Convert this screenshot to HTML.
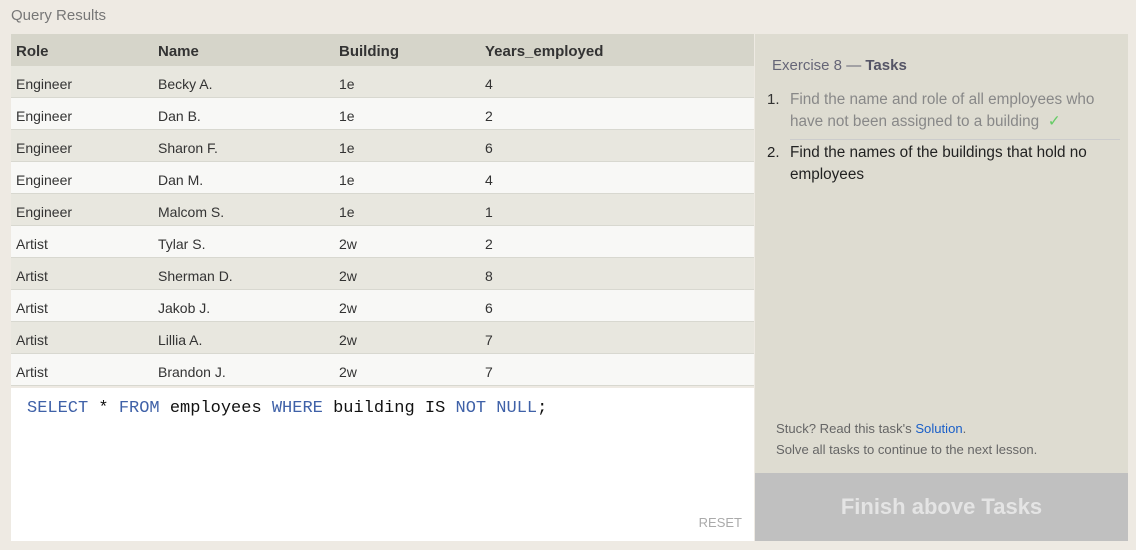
<!DOCTYPE html>
<html><head><style>
body{margin:0;width:1136px;height:550px;background:#eeeae3;font-family:"Liberation Sans",sans-serif;position:relative;overflow:hidden;color:#333}
.title{position:absolute;left:11px;top:7px;font-size:15px;color:#777}
.tbl{position:absolute;left:11px;top:34px;width:743px}
.row{height:31px;border-bottom:1px solid #d8d8d0;position:relative;font-size:14px;line-height:32px}
.row span{position:absolute;top:2px}
.hd{background:#d6d5ca;height:32px;border:0;font-weight:bold;font-size:15px;color:#333}
.o{background:#e8e7df}.e{background:#f8f8f6}
.c1{left:5px}.c2{left:147px}.c3{left:328px}.c4{left:474px}
.ed{position:absolute;left:11px;top:388px;width:743px;height:153px;background:#fff}
.code{position:absolute;left:16px;top:11px;font-family:"Liberation Mono",monospace;font-size:17px;color:#111}
.k{color:#3f61a8}
.reset{position:absolute;right:12px;bottom:11px;font-size:13px;color:#aaa}
.rp{position:absolute;left:755px;top:34px;width:373px;height:439px;background:#dedcd1}
.btn{position:absolute;left:755px;top:473px;width:373px;height:68px;background:#c0c0c0;color:#e4e4e4;font-size:22px;text-align:center;line-height:68px;font-weight:bold}
</style></head><body>
<div class="title">Query Results</div>
<div class="tbl">
<div class="row hd"><span class="c1">Role</span><span class="c2">Name</span><span class="c3">Building</span><span class="c4">Years_employed</span></div>
<div class="row o"><span class="c1">Engineer</span><span class="c2">Becky A.</span><span class="c3">1e</span><span class="c4">4</span></div>
<div class="row e"><span class="c1">Engineer</span><span class="c2">Dan B.</span><span class="c3">1e</span><span class="c4">2</span></div>
<div class="row o"><span class="c1">Engineer</span><span class="c2">Sharon F.</span><span class="c3">1e</span><span class="c4">6</span></div>
<div class="row e"><span class="c1">Engineer</span><span class="c2">Dan M.</span><span class="c3">1e</span><span class="c4">4</span></div>
<div class="row o"><span class="c1">Engineer</span><span class="c2">Malcom S.</span><span class="c3">1e</span><span class="c4">1</span></div>
<div class="row e"><span class="c1">Artist</span><span class="c2">Tylar S.</span><span class="c3">2w</span><span class="c4">2</span></div>
<div class="row o"><span class="c1">Artist</span><span class="c2">Sherman D.</span><span class="c3">2w</span><span class="c4">8</span></div>
<div class="row e"><span class="c1">Artist</span><span class="c2">Jakob J.</span><span class="c3">2w</span><span class="c4">6</span></div>
<div class="row o"><span class="c1">Artist</span><span class="c2">Lillia A.</span><span class="c3">2w</span><span class="c4">7</span></div>
<div class="row e"><span class="c1">Artist</span><span class="c2">Brandon J.</span><span class="c3">2w</span><span class="c4">7</span></div>
</div>
<div class="ed"><div class="code"><span class="k">SELECT</span> * <span class="k">FROM</span> employees <span class="k">WHERE</span> building IS <span class="k">NOT NULL</span>;</div><div class="reset">RESET</div></div>
<div class="rp">
<div style="position:absolute;left:17px;top:23px;font-size:15px;color:#667"><span>Exercise 8 — </span><b style="color:#556">Tasks</b></div>
<div style="position:absolute;left:12px;top:55px;font-size:15px;line-height:22px;color:#333">1.</div>
<div style="position:absolute;left:35px;top:55px;width:330px;font-size:15.3px;line-height:22px;color:#888;border-bottom:1px solid #ccc;padding-bottom:6px">Find the name and role of all employees who have not been assigned to a building &nbsp;<span style="color:#6c6">✓</span></div>
<div style="position:absolute;left:12px;top:108px;font-size:15px;line-height:22px;color:#222">2.</div>
<div style="position:absolute;left:35px;top:108px;width:330px;font-size:15.3px;line-height:22px;color:#222">Find the names of the buildings that hold no employees</div>
<div style="position:absolute;left:21px;top:384px;font-size:13.1px;line-height:21px;color:#666">Stuck? Read this task's <span style="color:#1a5fc8">Solution</span>.<br>Solve all tasks to continue to the next lesson.</div>
</div>
<div class="btn">Finish above Tasks</div>
</body></html>
